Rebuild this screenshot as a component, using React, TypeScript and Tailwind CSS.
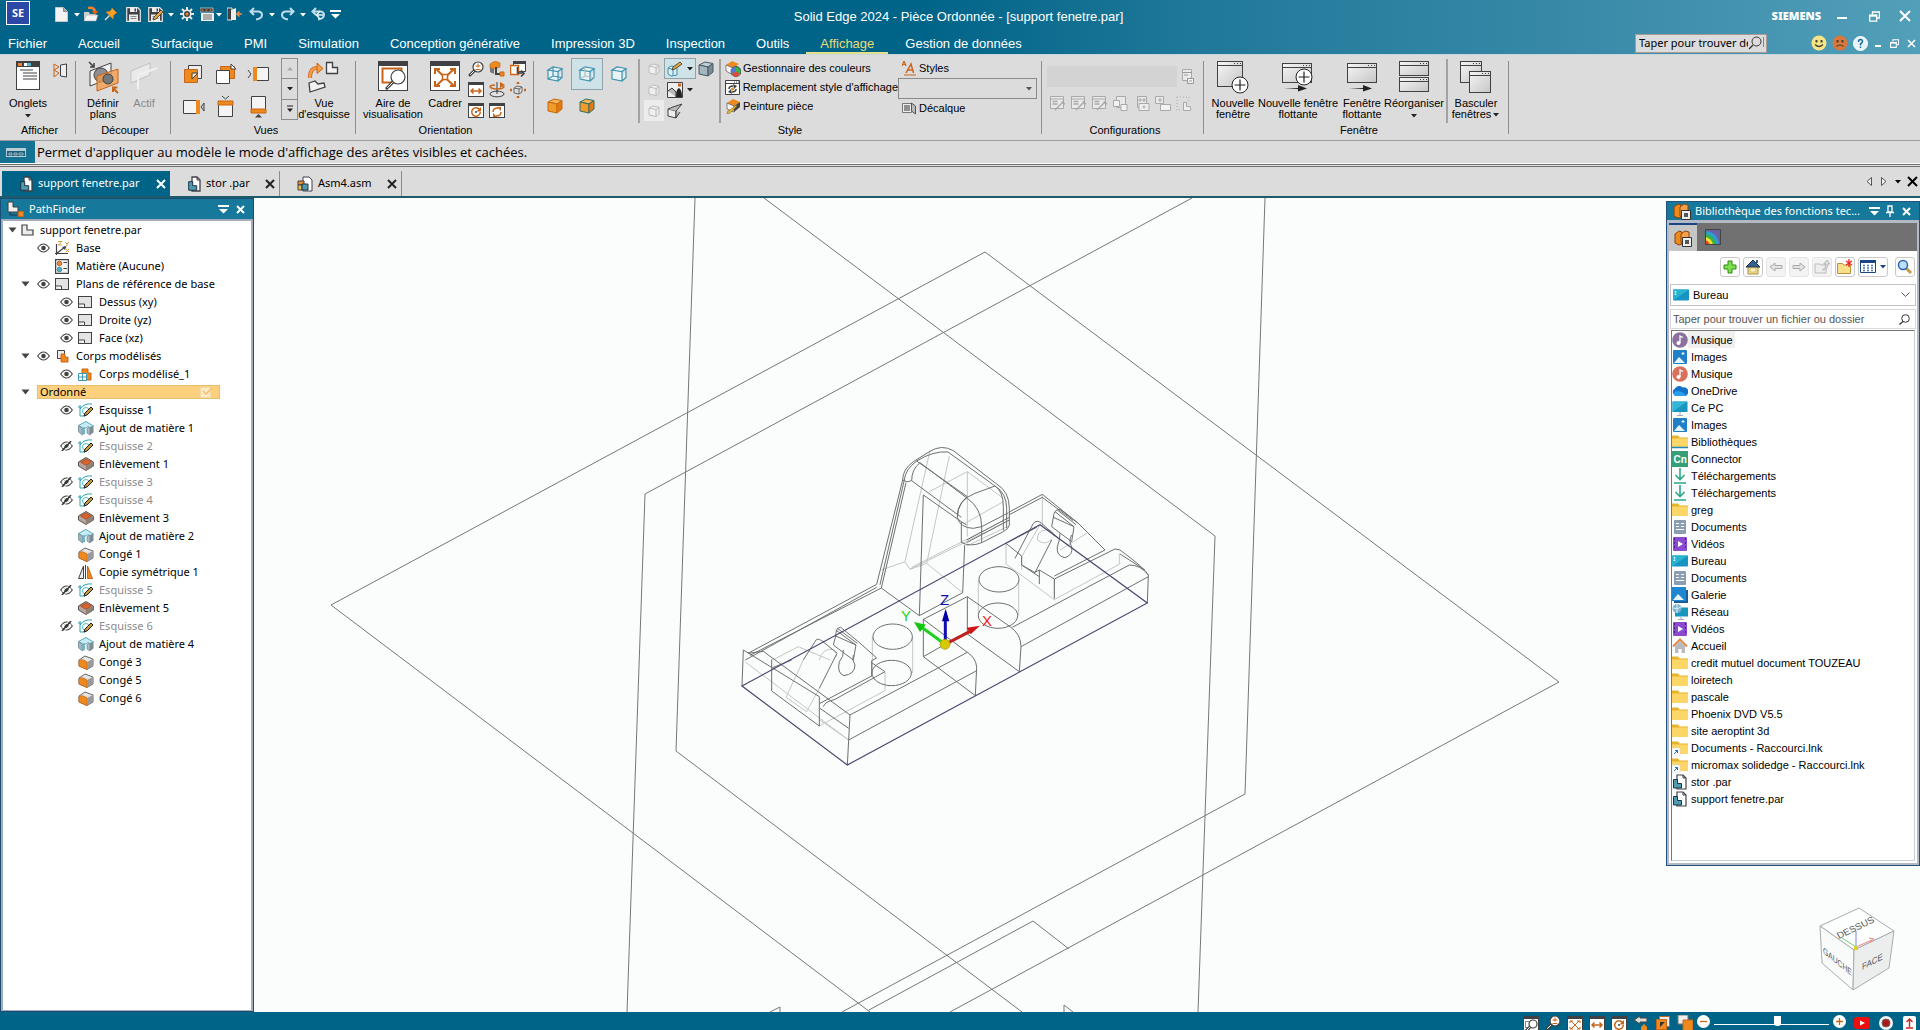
import React from "react";

type P = { children?: React.ReactNode };

const D = "#3f4145";
const O = "#ee8a1d";
const DO = "#c8651b";

function Ico({ w = 16, h = w, children }: P & { w?: number; h?: number }) {
  return (
    <svg width={w} height={h} viewBox={`0 0 ${w} ${h}`} fill="none" className="block shrink-0" aria-hidden="true">
      {children}
    </svg>
  );
}

/* ---------- shared glyphs ---------- */

const Caret = ({ c = "#222" }: { c?: string }) => (
  <Ico w={8} h={5}>
    <path d="M1 1h6l-3 3.5z" fill={c} />
  </Ico>
);

const Cross = ({ s = 11, c = "#fff", t = 2 }: { s?: number; c?: string; t?: number }) => (
  <Ico w={s}>
    <path d={`M1 1L${s - 1} ${s - 1}M${s - 1} 1L1 ${s - 1}`} stroke={c} strokeWidth={t} />
  </Ico>
);

const MenuMark = () => (
  <Ico w={11} h={10}>
    <path d="M0 1h11v2H0zM1 5h9L5.500 9.500z" fill="#fff" />
  </Ico>
);

function Cube({ s = 16, top = "#f9b45c", left = "#f39a2c", right = "#e27c12", line = "#c9690f" }: { s?: number; top?: string; left?: string; right?: string; line?: string }) {
  return (
    <svg width={s} height={s} viewBox="0 0 16 16" fill="none" className="block shrink-0" aria-hidden="true" strokeLinejoin="round">
      <path d="M1 4l6-3 8 1.500-5 3.500z" fill={top} stroke={line} />
      <path d="M1 4l9 2v9l-9-2z" fill={left} stroke={line} />
      <path d="M10 6l5-3.500V11l-5 4z" fill={right} stroke={line} />
    </svg>
  );
}

const WireCube = ({ hidden }: { hidden?: "full" | "dim" }) => (
  <Ico w={18}>
    <path d="M2 5l5-3 9 1.500-4 3zM2 5v9l10 2V6.500M12 16l4-3.500v-9" stroke="#3f93b0" strokeWidth="1.200" fill="#e9f3f6" />
    {hidden && <path d="M7 2v9l-5 3M7 11l9 1.500" stroke={hidden === "full" ? "#3f93b0" : "#b3bcc0"} strokeWidth="1.200" />}
  </Ico>
);

const GhostCube = () => (
  <Ico w={16}>
    <path d="M3 5l4-2 6 1.200-3 2.300zM3 5v7l7 1.500v-7M10 13.500l3-2.500V4.200" stroke="#bdbdbd" fill="#f0f0f0" />
  </Ico>
);

function Win({ w = 16, h = 15, children }: P & { w?: number; h?: number }) {
  return (
    <Ico w={w} h={h}>
      <rect x=".5" y=".5" width={w - 1} height={h - 1} fill="#fff" stroke={D} />
      <rect width={w} height={h > 20 ? 5 : 3} fill={D} />
      {children}
    </Ico>
  );
}

const Lens = ({ x, y, r, dark = D }: { x: number; y: number; r: number; dark?: string }) => (
  <g>
    <path d={`M${x - r * 0.7} ${y + r * 0.7}l${-r * 0.9} ${r * 0.9}`} stroke={dark} strokeWidth="3" strokeLinecap="round" />
    <path d={`M${x - r * 0.8} ${y + r * 0.8}l${-r * 0.7} ${r * 0.7}`} stroke="#fff" strokeWidth="1" strokeLinecap="round" />
    <circle cx={x} cy={y} r={r} fill="#fff" stroke={dark} strokeWidth="1.200" />
  </g>
);

/* ---------- quick access bar ---------- */

const NewDoc = () => (
  <Ico w={13} h={15}>
    <path d="M.5.5h8l4 4v10H.5z" fill="#f3f3f3" stroke="#c9c9c9" />
    <path d="M8.500.5v4h4" fill="#aaa" stroke="#8a8a8a" />
  </Ico>
);
const OpenDoc = () => (
  <Ico w={16}>
    <path d="M1 6h5l1 2h6v7H1z" fill="#cfcfcf" />
    <path d="M3 9h12l-2 6H1z" fill="#f4f4f4" stroke="#999" strokeWidth=".5" />
    <path d="M5 2c4-1 6 0 7 3" stroke="#f08030" strokeWidth="2.500" />
    <path d="M8.500 5h7L12 9z" fill="#e06010" />
  </Ico>
);
const Pin = () => (
  <Ico w={14}>
    <path d="M1 13l5-5" stroke="#ddd" strokeWidth="1.500" />
    <path d="M8 1l5 5-1.500.5-2 2L9 12 2 5l3.500-.5 2-2z" fill="#f6a02a" stroke="#d27a10" strokeWidth=".6" />
  </Ico>
);
const Floppy = ({ pen }: { pen?: boolean }) => (
  <Ico w={15}>
    <path d="M.7.7h11l2.600 2.600v11H.7z" fill={D} stroke="#e8e8e8" strokeWidth="1.200" />
    <path d="M4 1h7v4H4z" fill="#eee" />
    <path d="M8.500 1.500h1.500v3H8.500z" fill={D} />
    <path d="M3 7.500h9V14H3z" fill="#eee" />
    <path d="M4.500 9.500h6M4.500 11.500h6" stroke="#888" />
    {pen && <path d="M5 13l1-3 7-7 2 2-7 7z" fill="#e9a33c" stroke="#333" strokeWidth=".8" />}
  </Ico>
);
const Gear = () => (
  <Ico w={14}>
    <path d="M7 0v14M0 7h14M2 2l10 10M12 2L2 12" stroke="#e8e8e8" strokeWidth="2" />
    <circle cx="7" cy="7" r="4.500" fill="#e8e8e8" />
    <circle cx="7" cy="7" r="3" fill={D} />
    <circle cx="7" cy="7" r="1.500" fill="#f08a3c" />
  </Ico>
);
const ListWin = () => (
  <Ico w={15} h={15}>
    <path d="M0 1h13v4H0z" fill="#333" stroke="#ddd" strokeWidth=".7" />
    <path d="M1.500 3h2M5.500 3h2M9.500 3h2" stroke="#f6a66a" strokeWidth="1.200" />
    <path d="M1 6h13v8H1z" fill="#f2f2f2" />
    <path d="M3 8h9M3 10h9M3 12h9" stroke="#666" />
  </Ico>
);
const Exit = () => (
  <Ico w={16} h={14}>
    <path d="M0 1h5v12H0z" fill={D} stroke="#ddd" />
    <path d="M4 3l5-2v12H4z" fill="#eee" />
    <path d="M15 7H10M12.500 4.500L10 7l2.500 2.500" stroke="#f08a3c" strokeWidth="1.700" />
  </Ico>
);
const Undo = ({ flip, double }: { flip?: boolean; double?: boolean }) => (
  <Ico w={15} h={14}>
    <g transform={flip ? "matrix(-1 0 0 1 15 0)" : undefined}>
      <path d="M5 1L1.500 4.500 5 8M2 4.500h7q4 0 4 3.500t-6 4.500" stroke="#bcdde9" strokeWidth="2" />
      {double && <path d="M9 4L5.500 8 9 12M6 8h6" stroke="#e4f2f7" strokeWidth="1.600" />}
    </g>
  </Ico>
);

const Restore = ({ s = 11 }: { s?: number }) => (
  <svg width={s} height={s} viewBox="0 0 11 11" fill="none" className="block" aria-hidden="true">
    <path d="M3.500 3.500V1h7v6H8" stroke="#fff" strokeWidth="1.300" />
    <path d="M.7 4.200h7v6h-7z" stroke="#fff" strokeWidth="1.300" />
    <path d="M.7 4.700h7" stroke="#fff" strokeWidth="2" />
  </svg>
);

const Face = ({ c, sad }: { c: string; sad?: boolean }) => (
  <Ico w={16}>
    <circle cx="8" cy="8" r="7.500" fill={c} />
    <rect x="4.500" y="5" width="2" height="2.500" fill="#443" />
    <rect x="9.500" y="5" width="2" height="2.500" fill="#443" />
    <path d={sad ? "M4.500 11.500q3.500-3 7 0" : "M4 9.500q4 4 8 0"} stroke="#443" strokeWidth="1.200" />
  </Ico>
);

function HeadBtn({ label, children, cls = "" }: P & { label: string; cls?: string }) {
  return (
    <button type="button" aria-label={label} className={`flex items-center justify-center ${cls}`}>
      {children}
    </button>
  );
}

const MENU = ["Fichier", "Accueil", "Surfacique", "PMI", "Simulation", "Conception générative", "Impression 3D", "Inspection", "Outils", "Affichage", "Gestion de données"];

function Header() {
  return (
    <header className="flex h-[54px] shrink-0 flex-col bg-[linear-gradient(90deg,#006488_0%,#006488_48%,#1f7899_62%,#3a8aa9_83%,#529fb9_100%)] text-white">
      <div className="flex h-[32px] items-start">
        <div className="flex flex-1 items-start pl-[6px]">
          <div className="mt-px flex h-6 w-6 items-center justify-center border border-white bg-[#2b48a6] font-['Noto_Sans',sans-serif] text-[11px] font-bold">SE</div>
          <div className="mt-[6px] ml-[25px] flex h-4 items-center">
            <HeadBtn label="Nouveau"><NewDoc /></HeadBtn>
            <HeadBtn label="Options nouveau" cls="ml-[3px] w-3"><Caret c="#fff" /></HeadBtn>
            <HeadBtn label="Ouvrir"><OpenDoc /></HeadBtn>
            <HeadBtn label="Épingler" cls="ml-[5px]"><Pin /></HeadBtn>
            <HeadBtn label="Enregistrer" cls="ml-2"><Floppy /></HeadBtn>
            <HeadBtn label="Enregistrer sous" cls="ml-[7px]"><Floppy pen /></HeadBtn>
            <HeadBtn label="Options enregistrer" cls="ml-1 w-2"><Caret c="#fff" /></HeadBtn>
            <HeadBtn label="Options" cls="ml-[5px]"><Gear /></HeadBtn>
            <HeadBtn label="Fenêtres" cls="ml-[6px]"><ListWin /></HeadBtn>
            <HeadBtn label="Options fenêtres" cls="w-2"><Caret c="#fff" /></HeadBtn>
            <HeadBtn label="Fermer le fichier" cls="ml-1"><Exit /></HeadBtn>
            <HeadBtn label="Annuler" cls="ml-[6px]"><Undo /></HeadBtn>
            <HeadBtn label="Liste annuler" cls="ml-1 w-2"><Caret c="#fff" /></HeadBtn>
            <HeadBtn label="Rétablir" cls="ml-1"><Undo flip /></HeadBtn>
            <HeadBtn label="Liste rétablir" cls="ml-1 w-2"><Caret c="#fff" /></HeadBtn>
            <HeadBtn label="Annuler tout" cls="ml-1"><Undo double /></HeadBtn>
            <HeadBtn label="Personnaliser" cls="ml-1"><MenuMark /></HeadBtn>
          </div>
        </div>
        <h1 className="pt-[7px] font-['Liberation_Sans',Arial,sans-serif] text-[13px] leading-[19px]">Solid Edge 2024 - Pièce Ordonnée - [support fenetre.par]</h1>
        <div className="flex flex-1 items-start justify-end pt-[7px] pr-[9px]">
          <span className="font-['Noto_Sans',sans-serif] text-[11px] leading-[18px] font-black">SIEMENS</span>
          <div className="ml-4 flex h-[18px] items-center">
            <HeadBtn label="Réduire" cls="mt-1"><Ico w={10} h={2}><path d="M0 1h10" stroke="#fff" strokeWidth="2" /></Ico></HeadBtn>
            <HeadBtn label="Restaurer" cls="ml-[22px]"><Restore /></HeadBtn>
            <HeadBtn label="Fermer" cls="ml-[19px]"><Cross s={12} /></HeadBtn>
          </div>
        </div>
      </div>
      <div className="flex h-[22px] items-center justify-between">
        <nav className="flex h-full gap-[3px] font-['Liberation_Sans',Arial,sans-serif] text-[13px]">
          {MENU.map((m, i) => (
            <button
              key={m}
              type="button"
              className={`h-full pt-[3px] leading-[17px] ${i === 0 ? "pr-[14px] pl-2" : "px-[14px]"} ${m === "Affichage" ? "border-b-2 border-[#e3e08a] text-[#e6dc78]" : "border-b-2 border-transparent"}`}
            >
              {m}
            </button>
          ))}
        </nav>
        <div className="flex items-center pr-1">
          <label className="flex h-[19px] w-[132px] items-center border border-[#a89a94] bg-[#dcdcdc] pl-[3px]">
            <input aria-label="Rechercher une commande" placeholder="Taper pour trouver des commandes" className="w-[109px] bg-transparent font-['Noto_Sans',sans-serif] text-[11px] text-black outline-none placeholder:text-black" />
            <Ico w={16} h={14}>
              <circle cx="8.500" cy="5.500" r="4.500" stroke="#333" />
              <path d="M5 9l-4 4" stroke="#333" strokeWidth="1.300" />
              <path d="M15.500 1v10" stroke="#888" />
            </Ico>
          </label>
          <div className="ml-[44px] flex items-center">
            <HeadBtn label="Satisfait"><Face c="#f6e486" /></HeadBtn>
            <HeadBtn label="Mécontent" cls="ml-[5px]"><Face c="#d9773f" sad /></HeadBtn>
            <HeadBtn label="Aide" cls="ml-[5px] h-[15px] w-[15px] rounded-full border border-white bg-[#e9f4fa]">
              <Ico w={13}>
                <path d="M4.500 5q0-2.500 2-2.500t2 2q0 1.200-2 2.500v1.500M6.500 9.500V11" stroke="#1d6f9d" strokeWidth="1.500" />
              </Ico>
            </HeadBtn>
            <HeadBtn label="Réduire le document" cls="mt-[6px] ml-[7px]"><Ico w={6} h={2}><path d="M0 1h6" stroke="#fff" strokeWidth="2" /></Ico></HeadBtn>
            <HeadBtn label="Restaurer le document" cls="ml-[9px]"><Restore s={9} /></HeadBtn>
            <HeadBtn label="Fermer le document" cls="ml-2"><Cross s={9} t={1.5} /></HeadBtn>
          </div>
        </div>
      </div>
    </header>
  );
}

/* ---------- ribbon icons ---------- */

const Onglets = () => (
  <Ico w={24} h={29}>
    <rect x=".5" y=".5" width="23" height="28" fill="#fff" stroke={D} />
    <rect width="24" height="6" fill={D} />
    <path d="M2 2h4v3H2z" fill="#e8803a" />
    <path d="M8 2h4v3H8z" fill="#fff" />
    <path d="M11 2h4v3h-4z" fill="#5bb0cf" />
    <path d="M4 9h13M7 12h14M7 15h14M7 18h14" stroke={D} />
  </Ico>
);
const SidePane = () => (
  <Ico w={15}>
    <path d="M1 1v13M1 1l5 3-5 3 5 3-5 4" stroke={DO} />
    <path d="M7.500 2l6-1v13l-6-1z" fill="#eee" stroke={D} />
  </Ico>
);
const DefinePlanes = () => (
  <Ico w={32} h={33}>
    <path d="M2 1l5 5M7 2v4H3" stroke={D} strokeWidth="1.500" />
    <path d="M3 10L24 2v15L3 25z" fill="#f2f2f2" stroke={D} />
    <circle cx="14" cy="14" r="7" fill="#8d8f92" stroke={D} />
    <path d="M10 15l21-7v14l-21 8z" fill="#f39a45" fillOpacity=".75" stroke={DO} />
    <circle cx="21" cy="18" r="5" fill="#777" stroke={D} />
    <path d="M31 32l-5-5M26 31v-4.500h4.500" stroke={DO} strokeWidth="2" />
  </Ico>
);
const Actif = () => (
  <Ico w={28} h={30}>
    <path d="M1 10L20 2v12L1 22z" fill="#eaeaea" stroke="#c2c2c2" />
    <path d="M8 28V14L27 7" stroke="#f0f0f0" strokeWidth="2" />
  </Ico>
);
const V1 = () => (
  <Ico w={20}>
    <path d="M5.500 1.500h13v13h-13z" fill="#eee" stroke={D} />
    <path d="M1.500 5.500h13v13h-13z" fill={O} stroke={DO} />
    <path d="M9 15v-6h6z" fill="#fbe0b8" stroke={D} />
  </Ico>
);
const V2 = () => (
  <Ico w={22}>
    <path d="M5.500 3.500h14v12h-14z" fill={O} stroke={DO} />
    <path d="M1.500 7.500h13v13h-13z" fill="#fff" stroke={D} />
    <path d="M16 1v5h5z" fill="#fff" stroke={D} />
  </Ico>
);
const V3 = () => (
  <Ico w={23} h={16}>
    <path d="M6.500 1.500h15v13h-15z" fill="#f4f4f4" stroke={D} />
    <path d="M6 1h4v14H6z" fill={O} />
    <path d="M1 4l3 4-3 4" stroke={D} />
  </Ico>
);
const V4 = () => (
  <Ico w={23} h={16}>
    <path d="M1.500 1.500h16v13h-16z" fill="#f4f4f4" stroke={D} />
    <path d="M14 1h4v14h-4z" fill={O} />
    <path d="M22 4v8l-3-4z" fill="#ccc" stroke={D} />
  </Ico>
);
const V5 = () => (
  <Ico w={17} h={22}>
    <path d="M1.500 7.500h14v13h-14z" fill="#f4f4f4" stroke={D} />
    <path d="M1 5h15v4H1z" fill={O} stroke={DO} />
    <path d="M5 0l3.500 3L12 0" stroke={D} />
  </Ico>
);
const V6 = () => (
  <Ico w={17} h={23}>
    <path d="M1.500 1.500h14v16h-14z" fill="#f4f4f4" stroke={D} />
    <path d="M1 14h15v4H1z" fill={O} stroke={DO} />
    <path d="M5 22.500h7L8.500 19z" fill={D} />
  </Ico>
);
const SketchView = () => (
  <Ico w={32} h={32}>
    <path d="M2 17Q2 6 10 7" stroke={DO} strokeWidth="4" />
    <path d="M2 17Q2 6 10 7" stroke="#f6a04a" strokeWidth="2.500" />
    <path d="M9 2l6 5.500-6 5z" fill="#f6a04a" stroke={DO} />
    <path d="M18.500 1.500h6v5h5v6h-11z" fill="#f2f2f2" stroke={D} strokeWidth="1.300" />
    <path d="M1 22l6-2 3 3 6-1 1 4-15 5z" fill="#f2f2f2" stroke={D} strokeWidth="1.300" />
  </Ico>
);
const ViewArea = () => (
  <Win w={30} h={30}>
    <rect x="4.500" y="7.500" width="19" height="14" stroke={DO} strokeWidth="2" />
    <Lens x={20} y={16} r={7} />
  </Win>
);
const FitBig = () => (
  <Win w={30} h={30}>
    <path d="M6 8l18 17M24 8L6 25" stroke={DO} strokeWidth="2" />
    <path d="M5 13V8h5M20 8h5v5M25 20v5h-5M10 25H5v-5" stroke={DO} strokeWidth="2" />
    <rect x="12.500" y="13.500" width="5" height="5" fill="#fff" stroke={DO} strokeWidth="1.500" />
  </Win>
);
const ZoomPM = () => (
  <Ico w={16}>
    <Lens x={10} y={6} r={5} />
    <path d="M7.500 5h5M10 2.500v4M7.500 8.500h5" stroke={DO} />
  </Ico>
);
const CubeMove = () => (
  <Ico w={16}>
    <path d="M1 3l5-3 5 2v4L6 8 1 7z" fill={O} stroke={DO} strokeWidth=".7" />
    <path d="M1 6v5l4 2V8z" fill="#777" />
    <path d="M7 6v7h4" stroke={D} strokeWidth="2" />
    <path d="M11 11h4v4h-4z" fill={O} stroke={DO} />
  </Ico>
);
const WinMove = () => (
  <Ico w={16}>
    <path d="M3.500 1.500h12v9h-12z" fill="#fff" stroke={D} />
    <path d="M3 0h13v3H3z" fill={D} />
    <path d="M.5 4.500h8v9h-8z" fill="#fff" stroke={DO} strokeWidth="1.500" />
    <path d="M7.500 6v6h5M11 9.500l3 3-3 3" stroke={D} strokeWidth="1.600" />
  </Ico>
);
const PanWin = () => (
  <Win>
    <path d="M3 9h10M5.500 6.500L3 9l2.500 2.500M10.500 6.500L13 9l-2.500 2.500" stroke={DO} strokeWidth="1.500" />
  </Win>
);
const Spin = () => (
  <Ico w={16}>
    <path d="M8 0v12" stroke={D} />
    <path d="M1 5q0-2 5-2M15 4q0 3-7 3-5 0-7-2" stroke={DO} strokeWidth="1.600" />
    <path d="M11 0l5 3-5 3z" fill={DO} />
    <ellipse cx="8" cy="12" rx="7" ry="2.800" fill="#e4e4e4" stroke={D} />
    <path d="M8 8v4" stroke={D} />
  </Ico>
);
const CubeTargets = () => (
  <Ico w={16}>
    <path d="M4 6l3-2 5 1v5l-3 2-5-1z" fill="#ddd" stroke="#666" />
    <path d="M4 6l5 1 3-2M9 7v5" stroke="#666" />
    <path d="M8 0v2M8 14v2M0 8h2M14 8h2" stroke={DO} strokeWidth="2.500" />
  </Ico>
);
const RotWin = () => (
  <Win>
    <path d="M11.500 6.500A4.300 4.300 0 1 0 12.300 9" stroke={DO} strokeWidth="1.500" />
    <path d="M8.500 8.500L13 4v4.500z" fill={DO} />
    <circle cx="8" cy="9" r="1" fill={D} />
  </Win>
);
const RefreshWin = () => (
  <Win>
    <path d="M4 9q0-4 5-4M12 9q0 4-5 4" stroke={DO} strokeWidth="1.500" />
    <path d="M8 4h4v4zM8 14H4v-4z" fill={DO} />
  </Win>
);
const PencilCube = () => (
  <Ico w={16}>
    <path d="M1 7l3-2 6 1v8l-6 1-3-2z" stroke="#3f93b0" fill="#dcecf1" />
    <path d="M1 7l5 1.500V15" stroke="#3f93b0" />
    <path d="M5 9l1-3 7-5 2 2-7 5z" fill="#e9a33c" stroke="#333" strokeWidth=".8" />
  </Ico>
);
const Backdrop = () => (
  <Ico w={16}>
    <path d="M.5.500h15v15H.5z" fill="#eee" stroke={D} />
    <path d="M9 15q0-8 3-9 3 2 3 9z" fill="#222" />
    <path d="M1 9l4-3 4 4v5" fill="#bbb" stroke="#333" />
    <path d="M11 3h3" stroke={DO} strokeWidth="3" />
  </Ico>
);
const SharpCube = () => (
  <Ico w={16}>
    <path d="M1 6l8 2v7l-8-2z" fill="#eee" stroke={D} />
    <path d="M1 6l5-2 9-3-6 7v7l4-6" fill="#bbb" stroke={D} />
  </Ico>
);
const ColorMgr = () => (
  <Ico w={16}>
    <path d="M1 4l6-4 7 3-6 4z" fill={O} />
    <path d="M1 4l7 3v7l-7-4z" fill="#fafafa" stroke="#555" strokeWidth=".7" />
    <circle cx="11" cy="10.500" r="5" fill="#36b24a" stroke="#333" strokeWidth=".8" />
    <path d="M11 10.500V5.500a5 5 0 0 0-4.300 7.500z" fill="#5a76d8" />
    <path d="M11 10.500l-4.300 2.500a5 5 0 0 0 8.600 0z" fill="#e04a3a" />
  </Ico>
);
const Replace = () => (
  <Ico w={15}>
    <path d="M.5.500h14v14H.5z" fill="#fff" stroke={D} />
    <path d="M0 3.500h15M9 2h1M11 2h1M13 2h1" stroke={D} />
    <path d="M4 9q0-3 4-3M11 9q0 3-4 3" stroke={D} strokeWidth="1.500" />
    <path d="M8 4l4 2-3 3zM7 14l-4-2 3-3z" fill={D} />
    <circle cx="7.500" cy="9" r="1.500" fill={O} />
  </Ico>
);
const Paint = () => (
  <Ico w={15}>
    <path d="M1 4l6-4 7 3-6 4z" fill={O} />
    <path d="M1 4l7 3v6l-7-3z" fill="#f4f4f4" stroke="#555" strokeWidth=".7" />
    <path d="M8 7l6-4v5l-6 5z" fill="#444" />
    <path d="M1 15q0-4 3-4l6-5 1 1-6 6q-1 2-4 2z" fill="#e8b432" stroke="#7a5a10" strokeWidth=".5" />
  </Ico>
);
const StyleAA = () => (
  <Ico w={14} h={15}>
    <path d="M0 5l2-5 2 5M.8 3.500h2.400" stroke={DO} strokeWidth="1.200" />
    <path d="M4 12l5-9 2.500 9M6 9h5" stroke={DO} strokeWidth="1.500" />
    <path d="M2 14h12" stroke={DO} />
  </Ico>
);
const Decal = () => (
  <Ico w={14} h={13}>
    <path d="M.5 1.500h9v9h-9z" fill="#eee" stroke="#777" />
    <path d="M3 3v6M5 3v6M7 3v6" stroke="#333" />
    <path d="M9.500 1l4 3v8l-4-3z" fill="#bbb" stroke="#555" />
  </Ico>
);
const CfgIcon = ({ k }: { k: number }) => (
  <Ico w={16}>
    {k === 6 ? (
      <path d="M1 1h12v4M1 1v13h4" stroke="#a9a9a9" strokeDasharray="1 2" />
    ) : (
      <path d={k < 3 ? "M.5.500h13v12H.5zM.5 3h13" : k === 5 ? "M.5.500h8v7h-8z" : "M3.500.500h9v11h-9z"} stroke="#a9a9a9" fill="#e9e9e9" />
    )}
    {k < 3 && <path d="M2.500 5.500h5M2.500 8h5M5 14l8-8M12 5l1 2 2 1" stroke="#a9a9a9" strokeWidth="1.400" />}
    {k === 3 && <path d="M.5 4.500h6v6h-6zM8 8.500h6v6H8z" stroke="#a9a9a9" fill="#f2f2f2" />}
    {k === 4 && <path d="M5 3h2v2H5zM9 3h2v2H9zM5 7.500h10v7H5zM10 9.500v3M8.500 11h3" stroke="#a9a9a9" fill="#eee" />}
    {k === 5 && <path d="M3 4h4M5 2v4M5.500 8.500h10v6h-10z" stroke="#a9a9a9" fill="#f2f2f2" />}
    {k === 6 && <path d="M7.500 6.500h3v4h4v4h-7z" fill="#eee" stroke="#a9a9a9" />}
    {k === 7 && <path d="M3.500 3.500h9M5 6h4M8.500 9.500h6v5h-6zM10 12h3" stroke="#999" fill="#f2f2f2" />}
  </Ico>
);

const Pane = ({ x, y, w, h }: { x: number; y: number; w: number; h: number }) => (
  <g>
    <rect x={x + 0.5} y={y + 0.5} width={w} height={h} fill="url(#paneFill)" stroke={D} />
    <path d={`M${x} ${y + 4.5}h${w + 1}`} stroke={D} />
    <path d={`M${x + w - 8} ${y + 2.5}h7`} stroke={D} strokeDasharray="1 2" />
  </g>
);
const PaneDefs = () => (
  <defs>
    <linearGradient id="paneFill" x1="0" y1="0" x2="1" y2="1">
      <stop offset="0" stopColor="#f6f6f6" />
      <stop offset="1" stopColor="#c6c6c6" />
    </linearGradient>
  </defs>
);
const Plus = ({ x, y }: { x: number; y: number }) => (
  <g>
    <circle cx={x} cy={y} r="8" fill="#fff" stroke="#222" />
    <path d={`M${x - 5.5} ${y}h11M${x} ${y - 5.5}v11`} stroke="#222" strokeWidth="1.200" />
  </g>
);
const Arrow = ({ x, y }: { x: number; y: number }) => <path d={`M${x} ${y}h14v-3l9 3.500-9 3v-2.500z`} fill="#222" />;

/* ---------- ribbon ---------- */

const Sep = () => <div className="my-[6px] w-px shrink-0 bg-[#8e8e8e]" />;

function Group({ label, cls = "", labelCls = "", children }: P & { label: string; cls?: string; labelCls?: string }) {
  return (
    <section aria-label={label} className={`flex shrink-0 flex-col pt-[2px] ${cls}`}>
      <div className="flex h-[66px]">{children}</div>
      <div className={`text-center leading-[14px] ${labelCls}`}>{label}</div>
    </section>
  );
}

function Big({ icon, lines, cls, caret, tailCaret, dim }: { icon: React.ReactNode; lines: string[]; cls: string; caret?: boolean; tailCaret?: boolean; dim?: boolean }) {
  return (
    <button type="button" className={`flex shrink-0 flex-col items-center pt-1 leading-[11px] whitespace-nowrap ${dim ? "text-[#8a8a8a]" : ""} ${cls}`}>
      <span className="flex h-[37px] items-start">{icon}</span>
      {lines.map((l, i) => (
        <span key={l} className="flex items-center gap-px">
          {l}
          {tailCaret && i === lines.length - 1 && <Caret />}
        </span>
      ))}
      {caret && <span className="mt-1"><Caret /></span>}
    </button>
  );
}

function Cell({ label, cls = "", children }: P & { label: string; cls?: string }) {
  return (
    <button type="button" aria-label={label} className={`flex items-center justify-center ${cls}`}>
      {children}
    </button>
  );
}

function Row({ icon, text }: { icon: React.ReactNode; text: string }) {
  return (
    <button type="button" className="flex h-[19px] items-center gap-[2px] whitespace-nowrap">
      <span className="flex w-4 justify-center">{icon}</span>
      {text}
    </button>
  );
}

function Ribbon() {
  return (
    <div className="flex h-[87px] shrink-0 border-t border-b border-t-[#c8d6dc] border-b-[#9c9c9c] bg-[#dcdcdc] font-['Liberation_Sans',Arial,sans-serif] text-[11px] text-black">
      <Group label="Afficher" cls="w-[75px]" labelCls="pl-1">
        <Big icon={<Onglets />} lines={["Onglets"]} caret cls="w-[56px]" />
        <Cell label="Volets" cls="h-[26px] w-2"><SidePane /></Cell>
      </Group>
      <Sep />
      <Group label="Découper" cls="w-[94px]" labelCls="pl-1">
        <Big icon={<DefinePlanes />} lines={["Définir", "plans"]} cls="w-[54px]" />
        <Big icon={<Actif />} lines={["Actif"]} dim cls="w-[28px]" />
      </Group>
      <Sep />
      <Group label="Vues" cls="w-[184px] pl-[6px]">
        <div className="grid w-[98px] grid-cols-3 grid-rows-2">
          <Cell label="Vue de dessus"><V1 /></Cell>
          <Cell label="Vue de face"><V2 /></Cell>
          <Cell label="Vue de gauche"><V3 /></Cell>
          <Cell label="Vue de droite"><V4 /></Cell>
          <Cell label="Vue arrière"><V5 /></Cell>
          <Cell label="Vue de dessous"><V6 /></Cell>
        </div>
        <div className="mt-px ml-[6px] flex h-[62px] w-[17px] flex-col border border-[#8e8e8e]">
          <Cell label="Monter" cls="flex-1 border-b border-[#8e8e8e]"><Ico w={8} h={5}><path d="M1 4.500h6L4 1z" fill="#aaa" /></Ico></Cell>
          <Cell label="Descendre" cls="flex-1 border-b border-[#8e8e8e]"><Caret /></Cell>
          <Cell label="Toutes les vues" cls="flex-1"><Ico w={8} h={8}><path d="M1 1h6" stroke="#222" /><path d="M1 3.500h6L4 7z" fill="#222" /></Ico></Cell>
        </div>
        <Big icon={<SketchView />} lines={["Vue", "d'esquisse"]} cls="w-[52px]" />
      </Group>
      <Sep />
      <Group label="Orientation" cls="w-[177px] pl-[2px]">
        <Big icon={<ViewArea />} lines={["Aire de", "visualisation"]} cls="w-[70px]" />
        <Big icon={<FitBig />} lines={["Cadrer"]} cls="w-[34px]" />
        <div className="mt-px ml-[3px] grid h-[63px] w-[63px] grid-cols-3 grid-rows-3">
          <Cell label="Zoom"><ZoomPM /></Cell>
          <Cell label="Faire glisser"><CubeMove /></Cell>
          <Cell label="Déplacer"><WinMove /></Cell>
          <Cell label="Panoramique"><PanWin /></Cell>
          <Cell label="Tourner"><Spin /></Cell>
          <Cell label="Regarder une face"><CubeTargets /></Cell>
          <Cell label="Rotation"><RotWin /></Cell>
          <Cell label="Actualiser"><RefreshWin /></Cell>
        </div>
      </Group>
      <Sep />
      <Group label="Style" cls="w-[507px] pl-[5px]">
        <div className="mt-px grid h-16 w-24 grid-cols-3 grid-rows-2">
          <Cell label="Filaire"><WireCube hidden="full" /></Cell>
          <Cell label="Arêtes visibles et cachées" cls="border border-[#8ea4ad] bg-[#cfe2e8]"><WireCube hidden="dim" /></Cell>
          <Cell label="Arêtes visibles"><WireCube /></Cell>
          <Cell label="Ombré"><Cube /></Cell>
          <Cell label="Ombré avec arêtes"><Cube line="#2f6f62" /></Cell>
        </div>
        <div className="mt-[2px] ml-[3px] h-16 w-[2px] bg-[#a2a2a2]" />
        <div className="mt-px ml-1 grid h-[63px] grid-cols-[20px_32px_20px] grid-rows-3">
          <Cell label="Ombre portée"><GhostCube /></Cell>
          <Cell label="Arêtes vives" cls="gap-[3px] border border-[#8ea4ad] bg-[#cfe2e8]"><PencilCube /><Caret /></Cell>
          <Cell label="Perspective"><Cube top="#c3ced4" left="#a3b7c0" right="#7c8a92" line="#4a5a62" /></Cell>
          <Cell label="Réflexion"><GhostCube /></Cell>
          <Cell label="Arrière-plan" cls="gap-[3px]"><Backdrop /><Caret /></Cell>
          <span />
          <Cell label="Occlusion" cls="bg-[#ececec]"><GhostCube /></Cell>
          <Cell label="Netteté" cls="justify-start pl-[3px]"><SharpCube /></Cell>
        </div>
        <div className="mt-[2px] ml-[3px] h-16 w-[2px] bg-[#a2a2a2]" />
        <div className="mt-[2px] ml-1 flex w-[173px] flex-col">
          <Row icon={<ColorMgr />} text="Gestionnaire des couleurs" />
          <Row icon={<Replace />} text="Remplacement style d'affichage" />
          <Row icon={<Paint />} text="Peinture pièce" />
        </div>
        <div className="mt-[2px] w-[139px]">
          <div className="pl-[3px]"><Row icon={<StyleAA />} text="Styles" /></div>
          <div className="relative h-[21px]">
            <select aria-label="Style" className="h-full w-full appearance-none border border-[#8a8a8a] bg-[#dcdcdc]" />
            <span className="pointer-events-none absolute top-[8px] right-[4px]"><Caret c="#555" /></span>
          </div>
          <div className="pl-[3px]"><Row icon={<Decal />} text="Décalque" /></div>
        </div>
      </Group>
      <Sep />
      <Group label="Configurations" cls="w-[161px] pl-[5px]">
        <div>
          <div className="mt-[9px] flex items-center gap-[2px]">
            <select aria-label="Configuration" disabled className="h-[21px] w-[130px] appearance-none bg-[#d3d3d3]" />
            <Cell label="Enregistrer la configuration"><CfgIcon k={7} /></Cell>
          </div>
          <div className="mt-[9px] flex gap-[5px] pl-[3px]">
            {[0, 1, 2, 3, 4, 5, 6].map((k) => (
              <Cell key={k} label={`Configuration ${k + 1}`}><CfgIcon k={k} /></Cell>
            ))}
          </div>
        </div>
      </Group>
      <Sep />
      <Group label="Fenêtre" cls="w-[304px] pl-[6px]">
        <Big cls="w-[46px]" lines={["Nouvelle", "fenêtre"]} icon={<Ico w={32} h={33}><PaneDefs /><Pane x={0} y={0} w={25} h={25} /><Plus x={23} y={24} /></Ico>} />
        <Big cls="w-[84px]" lines={["Nouvelle fenêtre", "flottante"]} icon={<Ico w={32} h={33}><Pane x={0} y={2} w={29} h={19} /><Plus x={22} y={16} /><Arrow x={2} y={27} /></Ico>} />
        <Big cls="w-[44px]" lines={["Fenêtre", "flottante"]} icon={<Ico w={31} h={33}><Pane x={0} y={2} w={29} h={19} /><Arrow x={2} y={27} /></Ico>} />
        <Big cls="w-[60px]" caret lines={["Réorganiser"]} icon={<Ico w={31} h={33}><Pane x={0} y={0} w={29} h={14} /><Pane x={0} y={16} w={29} h={14} /></Ico>} />
        <div className="mt-[2px] ml-[2px] h-16 w-[2px] bg-[#a2a2a2]" />
        <Big cls="w-[56px]" tailCaret lines={["Basculer", "fenêtres"]} icon={<Ico w={32} h={33}><Pane x={0} y={0} w={21} h={21} /><Pane x={9} y={10} w={21} h={21} /></Ico>} />
      </Group>
      <Sep />
    </div>
  );
}

/* ---------- prompt bar and document tabs ---------- */

const PartDoc = () => (
  <Ico w={13} h={16}>
    <path d="M4 1h5l3 3v11H4z" fill="#fff" stroke={D} strokeWidth="1.300" />
    <path d="M9 1v3h3" stroke={D} />
    <path d="M.7 5.700h4v4h4v4.500h-8z" fill="#4f9bb0" stroke="#234" />
  </Ico>
);
const AsmDoc = () => (
  <Ico w={16}>
    <path d="M6 1h6l3 3v11H6z" fill="#fff" stroke={D} />
    <path d="M1 5h6v4H1z" fill={O} stroke={D} />
    <path d="M1 9h4v5H1z" fill="#f0c040" stroke={D} />
    <path d="M5 8h6v6H5z" fill="#4f9bb0" stroke="#234" />
  </Ico>
);

function DocTab({ name, active, icon, cls }: { name: string; active?: boolean; icon: React.ReactNode; cls: string }) {
  return (
    <div className={`flex h-full items-center ${active ? "bg-[#006488] text-white" : "border-r border-[#8c8c8c]"} ${cls}`}>
      <button type="button" className="flex items-center gap-[5px] whitespace-nowrap">
        {icon}
        {name}
      </button>
      <button type="button" aria-label={`Fermer ${name}`} className="ml-auto pr-[4px]">
        <Cross s={10} c={active ? "#fff" : "#222"} />
      </button>
    </div>
  );
}

function Bars() {
  return (
    <>
      <div className="flex h-[23px] shrink-0 items-center border-b border-b-white bg-[#dcdcdc] font-['Open_Sans',sans-serif] text-[13px] text-black">
        <div className="flex h-full w-[35px] items-center justify-center bg-[#157293] pr-1">
          <Ico w={20} h={9}>
            <rect x=".5" y=".5" width="19" height="8" fill="#1c5d78" stroke="#b9cdd6" />
            <path d="M1 2h18" stroke="#b9cdd6" strokeWidth="2" />
            <path d="M3 5h3v2H3zM8 5h3v2H8zM13 5h4v2h-4z" stroke="#b9cdd6" strokeWidth=".8" />
          </Ico>
        </div>
        <p className="pl-[2px] leading-[21px]">Permet d'appliquer au modèle le mode d'affichage des arêtes visibles et cachées.</p>
      </div>
      <div className="h-[3px] shrink-0 border-y border-[#6f6f6f] bg-[#e4e4e4]" />
      <div className="flex h-[31px] shrink-0 items-stretch border-b-2 border-b-[#1f5a6b] bg-[#dcdcdc] pt-[4px] pl-[2px] font-['Noto_Sans',sans-serif] text-[11px] text-black">
        <DocTab name="support fenetre.par" active cls="w-[168px] pl-[18px]" icon={<PartDoc />} />
        <DocTab name="stor .par" cls="w-[110px] pl-[18px]" icon={<PartDoc />} />
        <DocTab name="Asm4.asm" cls="w-[122px] pl-[17px]" icon={<AsmDoc />} />
        <div className="ml-auto flex items-center pr-[2px] pb-1">
          <Cell label="Onglet précédent"><Ico w={6} h={9}><path d="M5.500.500v8L1 4.500z" stroke="#555" fill="#eee" /></Ico></Cell>
          <Cell label="Onglet suivant" cls="ml-[9px]"><Ico w={6} h={9}><path d="M.5.500v8L5 4.500z" stroke="#555" fill="#eee" /></Ico></Cell>
          <Cell label="Liste des onglets" cls="ml-[7px]"><Caret c="#000" /></Cell>
          <Cell label="Fermer l'onglet" cls="ml-[5px]"><Cross s={11} c="#000" /></Cell>
        </div>
      </div>
    </>
  );
}

/* ---------- PathFinder ---------- */

const Eye = ({ off }: { off?: boolean }) => (
  <Ico w={13} h={10}>
    <path d="M.7 5Q3.500 1 6.500 1t5.800 4Q9.500 9 6.500 9T.7 5z" fill="#fff" stroke="#444" strokeWidth="1.200" />
    <circle cx="6.500" cy="5" r="2.300" fill="#444" />
    {off && <path d="M2 10L11 0" stroke="#333" strokeWidth="1.500" />}
    {off && <path d="M1 7.500L9 .5M4 9.500l8-7" stroke="#fff" strokeWidth=".8" />}
  </Ico>
);
const Tri = () => (
  <Ico w={9} h={6}>
    <path d="M.5.500h8l-4 5z" fill="#444" />
  </Ico>
);

type Kind = "part" | "base" | "mat" | "plane" | "bodies" | "body" | "sketch" | "add" | "cut" | "round" | "mirror";

function TreeIcon({ k }: { k: Kind }) {
  switch (k) {
    case "part":
      return <Ico w={13} h={12}><path d="M1 1h5v5h6v5H1z" fill="#ececec" stroke={D} strokeWidth="1.200" /></Ico>;
    case "base":
      return <Ico w={15}><path d="M1.500 3v11M0 12.500h13M1.500 12.500L10 6" stroke={D} strokeWidth="1.200" /><path d="M11.500 5L7 6l3 3z" fill={D} /><path d="M3 .5h4L3.500 4H7M10 1l2 2 2-2M12 3v2M11 8l3 3M14 8l-3 3" stroke="#d39a3a" /></Ico>;
    case "mat":
      return <Ico w={14} h={15}><rect x=".6" y=".6" width="12.800" height="13.800" fill="#f2f2f2" stroke={D} strokeWidth="1.200" /><circle cx="4.500" cy="4.500" r="2.300" fill="#e58a3a" stroke="#7a3a10" strokeWidth=".6" /><circle cx="4.500" cy="10.500" r="2.300" fill="#55b3cf" stroke="#1f5a70" strokeWidth=".6" /><path d="M8.500 3.500H12M8.500 9.500H12" stroke={D} /></Ico>;
    case "plane":
      return <Ico w={14} h={12}><rect x=".5" y=".5" width="13" height="11" fill="#e4e4e4" stroke={D} /><path d="M.5 8h6v3.500" stroke={D} fill="#fff" /></Ico>;
    case "bodies":
      return <Ico w={14}><path d="M2.500 1.500h7v8h-7z" fill="#eee" stroke={D} /><path d="M7 5h3v3h3v5H6V5z" fill={O} stroke={DO} /></Ico>;
    case "body":
      return <Ico w={14} h={13}><path d="M4 1h6v4h3v7H4z" fill={O} stroke={DO} /><path d="M.5 5.500h8v7h-8zM4.500 5.500v7M.5 9h8" fill="#fff" stroke="#3c9ab8" /></Ico>;
    case "sketch":
      return <Ico w={15} h={15}><path d="M0 4h3M2 2v11h5M2 6Q6 0 14 1" stroke="#2aa3b5" /><circle cx="8" cy="8" r="3.500" stroke="#55b9c6" /><path d="M6 13l1-3 6-6 2 2-6 6z" fill="#c79a3c" stroke="#222" /></Ico>;
    case "add":
      return <Ico w={16} h={15}><path d="M.5 4.500L5 2l3-1.500L15.500 5 12 6.500q-2-2-4 .5L4.500 7z" fill="#c8ecf4" stroke="#5aa8bc" /><path d="M.5 4.500L4.500 7v7l-4-3z" fill="#9fb3ba" stroke="#6d858d" strokeWidth=".7" /><path d="M4.500 7L7 6v7l-2.500 1z" fill="#6fb6c8" /><path d="M9 8q1-2 3-1.500v7.500l-3-2z" fill="#a9bcc3" stroke="#6d858d" strokeWidth=".7" /><path d="M12 6.500L15.500 5v6.500L12 14z" fill="#7c8d94" /></Ico>;
    case "cut":
      return <Ico w={16} h={14}><path d="M.5 5L8 .5 15.500 5v4L8 13.500.5 9z" fill="#b5a79e" stroke="#5e5049" /><path d="M2.500 5L8 2l5.500 3L8 8.500z" fill="#d7622a" stroke="#9c3d10" strokeWidth=".6" /><path d="M8 8.500v5L15.500 9V5z" fill="#8e817a" /></Ico>;
    case "round":
      return <Ico w={16} h={15}><path d="M1 5l6-4 8 3v7l-6 3.500L1 11z" fill="#e6e6e6" stroke="#666" /><path d="M1 6q3-3 8 1v7.500L1 11z" fill={O} stroke={DO} strokeWidth=".7" /><path d="M9 7l6-3v7l-6 3.500z" fill="#9a9a9a" /></Ico>;
    case "mirror":
      return <Ico w={15} h={14}><path d="M5.500 1v12.500h-5z" fill="#eee" stroke={D} /><path d="M7.500 0v14" stroke={D} /><path d="M9.500 1v12.500h5z" fill={O} stroke={DO} /></Ico>;
  }
}

type Node = { t: string; k: Kind; lvl: 1 | 2; eye?: "on" | "off"; open?: boolean };

const TOP: Node[] = [
  { t: "Base", k: "base", lvl: 1, eye: "on" },
  { t: "Matière (Aucune)", k: "mat", lvl: 1 },
  { t: "Plans de référence de base", k: "plane", lvl: 1, eye: "on", open: true },
  { t: "Dessus (xy)", k: "plane", lvl: 2, eye: "on" },
  { t: "Droite (yz)", k: "plane", lvl: 2, eye: "on" },
  { t: "Face (xz)", k: "plane", lvl: 2, eye: "on" },
  { t: "Corps modélisés", k: "bodies", lvl: 1, eye: "on", open: true },
  { t: "Corps modélisé_1", k: "body", lvl: 2, eye: "on" },
];
const FEATURES: Node[] = [
  { t: "Esquisse 1", k: "sketch", lvl: 2, eye: "on" },
  { t: "Ajout de matière 1", k: "add", lvl: 2 },
  { t: "Esquisse 2", k: "sketch", lvl: 2, eye: "off" },
  { t: "Enlèvement 1", k: "cut", lvl: 2 },
  { t: "Esquisse 3", k: "sketch", lvl: 2, eye: "off" },
  { t: "Esquisse 4", k: "sketch", lvl: 2, eye: "off" },
  { t: "Enlèvement 3", k: "cut", lvl: 2 },
  { t: "Ajout de matière 2", k: "add", lvl: 2 },
  { t: "Congé 1", k: "round", lvl: 2 },
  { t: "Copie symétrique 1", k: "mirror", lvl: 2 },
  { t: "Esquisse 5", k: "sketch", lvl: 2, eye: "off" },
  { t: "Enlèvement 5", k: "cut", lvl: 2 },
  { t: "Esquisse 6", k: "sketch", lvl: 2, eye: "off" },
  { t: "Ajout de matière 4", k: "add", lvl: 2 },
  { t: "Congé 3", k: "round", lvl: 2 },
  { t: "Congé 5", k: "round", lvl: 2 },
  { t: "Congé 6", k: "round", lvl: 2 },
];

function TreeRow({ n }: { n: Node }) {
  return (
    <li className={`flex h-[18px] items-center whitespace-nowrap ${n.lvl === 1 ? "pl-[18px]" : "pl-[41px]"} ${n.eye === "off" ? "text-[#8b8b8b]" : ""}`}>
      <span className="w-4">{n.open && <button type="button" aria-label="Réduire" className="block"><Tri /></button>}</span>
      <span className="w-[18px]">
        {n.eye && <button type="button" aria-label={n.eye === "on" ? "Masquer" : "Afficher"} className="block"><Eye off={n.eye === "off"} /></button>}
      </span>
      <span className="w-[21px]"><TreeIcon k={n.k} /></span>
      {n.t}
    </li>
  );
}

function PathFinder() {
  return (
    <aside className="flex w-[254px] shrink-0 flex-col border border-[#1c4d74] bg-[#a4acbb] font-['Noto_Sans',sans-serif] text-[11px] text-black">
      <div className="flex h-[20px] shrink-0 items-center bg-[#16789b] pr-[8px] pl-[5px] text-white">
        <Ico w={19} h={17}>
          <path d="M2 1h5v5h5v5H2z" fill="#eee" stroke={D} />
          <path d="M4 11v3h7" stroke="#234" />
          <path d="M12.500 10.500h5v5h-5z" fill={O} stroke={DO} />
        </Ico>
        <h2 className="pl-1 text-[11px] leading-[20px]">PathFinder</h2>
        <Cell label="Menu du volet" cls="ml-auto"><MenuMark /></Cell>
        <Cell label="Fermer le volet" cls="ml-[7px]"><Cross s={9} /></Cell>
      </div>
      <div className="mx-[2px] mt-[2px] mb-px flex-1 bg-white">
        <ul>
          <li className="flex h-[18px] items-center pl-[5px]">
            <span className="w-[13px]"><button type="button" aria-label="Réduire" className="block"><Tri /></button></span>
            <span className="w-[19px]"><TreeIcon k="part" /></span>
            support fenetre.par
          </li>
          {TOP.map((n) => <TreeRow key={n.t} n={n} />)}
          <li className="flex h-[18px] items-center pl-[18px]">
            <span className="w-4"><button type="button" aria-label="Réduire" className="block"><Tri /></button></span>
            <span className="flex h-[14px] w-[183px] items-center justify-between border border-[#e8bf6c] bg-[#fcd07c] pr-[6px] pl-[2px] leading-[12px]">
              Ordonné
              <Ico w={13} h={11}>
                <rect x=".5" y=".5" width="10" height="10" fill="#fde9c4" stroke="#f3d9a4" />
                <path d="M3 4l3 3 6-6" stroke="#f0c070" strokeWidth="1.500" />
              </Ico>
            </span>
          </li>
          {FEATURES.map((n) => <TreeRow key={n.t} n={n} />)}
        </ul>
      </div>
    </aside>
  );
}

/* ---------- model view ---------- */

function ModelView() {
  return (
    <svg viewBox="254 198 1666 814" preserveAspectRatio="xMidYMid slice" className="block h-full w-full" fill="none" role="img" aria-label="Vue filaire de la pièce">
      <g stroke="#757779" strokeWidth="1">
        <path d="M870 1012L331 605 985 252 1559 682 950 1012" />
        <path d="M695 198L676 751 1022 1012" />
        <path d="M1265 198L1245 794 842 1012" />
        <path d="M627 1012L645 494 1192 198" />
        <path d="M764 198L1215 536 1198 1012" />
        <path d="M869 1010L1033 921 1069 949" />
        <path d="M770 1012l10-5v5M1064 1012v-7l9 7" />
      </g>
      <g transform="translate(720 430) scale(0.33333)" strokeWidth="3">
        {/* hidden edges */}
        <g stroke="#c3c5c6">
          <path d="M630 62L555 395 570 418 860 275M688 78L620 400 728 488M484 420L555 395M575 412L850 272M570 418L620 400" />
          <path d="M628 185L742 125 850 205M742 125V320M735 280L850 215M740 348L862 290" />
          <path d="M76 696L386 930M298 888L495 782M300 870L386 930" />
          <path d="M198 802L260 845 298 775M198 802L250 690M158 690L235 650 330 690" />
          <path d="M858 402L1003 509 1198 403V370M858 340L858 402M905 378V420M1003 447V509M960 284L905 380M1100 310L1020 360" />
          <path d="M298 690q8-30 30-32t22 22M952 330q0-28 25-30t25 20M952 330q25 20 45-5" />
          <path d="M495 725V782M967 195V290M775 450V557M896 450V557M457 620V729M578 620V729" />
        </g>
        {/* visible edges */}
        <g stroke="#6c6e70">
          <path d="M66 768L70 660 298 800V888L155 783V688M84 670L130 664 390 855M84 670L470 463M90 676L484 474M76 690L470 472" />
          <path d="M382 1005L390 855 742 667M386 930L770 722M386 895L300 835M300 820L455 738M310 830Q315 815 345 808L495 725 455 698" />
          <path d="M610 568L742 500 870 590Q903 612 903 650L898 725 742 612V500M610 568V680L766 797 770 712Q768 684 742 667L610 568M610 680L742 605" />
          <path d="M877 592L1228 405M903 650L1285 440M1282 519L1285 435Q1275 415 1200 360L1185 357 1003 447 958 420 942 428" />
          <path d="M1200 372L1275 420M1228 405Q1262 405 1285 435" />
          <path d="M470 463L548 150Q548 118 580 95L630 64Q665 42 700 62L830 162Q868 185 868 235V285Q866 297 850 305L785 338Q750 352 724 337V275L610 195 598 557 484 474 558 158" />
          <path d="M480 464L553 150Q556 118 590 93Q640 62 684 66L825 168Q860 190 860 235V295M575 152Q575 118 600 98L742 205Q785 235 785 290V338M548 150Q562 160 575 152L724 262" />
          <path d="M712 262Q712 210 765 190L825 168Q850 185 850 230V302M712 262Q720 294 760 295L785 290 866 248M590 93L742 200 Q712 222 712 262" />
          <path d="M728 488L734 345M728 488L598 557M740 330L868 262M740 338L868 270M724 275L740 285" />
          <path d="M868 246L967 193 1075 280 1155 360 1003 438M868 254L967 202 1060 272M858 340L905 378V405L945 428 995 330M885 385L940 280M858 340L950 292M958 420V462M1003 447V505M905 405L958 440" />
          <path d="M1000 265Q1000 238 1020 238L1075 280M1005 245L1062 290M1012 240L1068 284M995 290L1000 262 1062 290 1055 335 995 290M940 280Q950 268 965 280L1015 325" />
          <path d="M1020 310Q1020 330 1012 350Q1008 378 1035 383Q1060 375 1055 350Q1045 335 1055 315" />
          <path d="M347 620Q347 592 362 592L415 635M347 600L408 645M352 595L412 640M340 645L347 618 408 645 400 690 340 645M285 635Q290 622 305 632L352 670M415 635L470 684 455 692V740" />
          <path d="M370 660Q372 680 358 695Q350 730 372 737Q405 732 405 705Q395 690 400 675M285 635L250 690M350 672L298 775M158 713L215 690" />
          <ellipse cx="837" cy="448" rx="60" ry="38" />
          <ellipse cx="834" cy="557" rx="59" ry="38" />
          <ellipse cx="518" cy="620" rx="59" ry="38" />
          <ellipse cx="515" cy="729" rx="59" ry="38" />
        </g>
        <path d="M66 768L960 284 1282 519 382 1005z" stroke="#47456f" strokeWidth="3.500" />
        {/* origin triad */}
        <path d="M675 643L600 588" stroke="#1fd01f" strokeWidth="9" />
        <path d="M582 576l36 8-18 22z" fill="#12c512" />
        <path d="M675 643L755 602" stroke="#c02020" strokeWidth="9" />
        <path d="M780 587l-28 26-12-20z" fill="#d01515" />
        <path d="M676 643V560" stroke="#1010b0" strokeWidth="9" />
        <path d="M677 536l11 38h-22z" fill="#0000a8" />
        <circle cx="675" cy="643" r="15" fill="#d8c800" stroke="#a09400" strokeWidth="2" />
      </g>
      <g className="font-['Liberation_Sans',Arial,sans-serif] text-[15px]">
        <text x="940" y="605" fill="#1010b0">Z</text>
        <text x="901" y="621" fill="#22d422">Y</text>
        <text x="982" y="626" fill="#ee2222">X</text>
      </g>
      {/* view cube */}
      <g stroke="#a9abac" strokeWidth="1">
        <path d="M1820 926L1859 908 1894 931 1854 950z" fill="#fdfefe" />
        <path d="M1820 926L1854 950 1853 990 1822 963z" fill="#f9fafa" />
        <path d="M1854 950L1894 931 1889 968 1853 990z" fill="#eceeee" />
      </g>
      <g className="font-['Liberation_Sans',Arial,sans-serif]" fill="#55585a">
        <text transform="matrix(.88 -.42 .45 .8 1839 939)" className="text-[10px]">DESSUS</text>
        <text transform="matrix(.75 .6 0 1 1823 953)" className="text-[9px]">GAUCHE</text>
        <text transform="matrix(.88 -.46 0 1 1862 970)" className="text-[9px]">FACE</text>
      </g>
      <path d="M1856 947V931" stroke="#8080e8" />
      <path d="M1856 947L1842 938" stroke="#70d070" />
      <path d="M1856 947L1872 940M1869 938l5 1-4 3" stroke="#f08080" />
      <path d="M1854 946h4v4h-4z" fill="#d8cf30" />
    </svg>
  );
}

/* ---------- library panel ---------- */

type FKind = "music" | "music2" | "img" | "cloud" | "pc" | "lib" | "cn" | "down" | "folder" | "doc" | "video" | "desk" | "gal" | "net" | "home" | "link" | "par";

function FileIcon({ k }: { k: FKind }) {
  const folder = (
    <>
      <path d="M0 1.500h6l1.500 2H16V14H0z" fill="#e8b229" />
      <path d="M0 4.500h16V14H0z" fill="#fcd667" />
    </>
  );
  switch (k) {
    case "music":
    case "music2":
      return <Ico><circle cx="8" cy="8" r="7.800" fill={k === "music" ? "#8c70a0" : "#d9705c"} /><circle cx="6.500" cy="11" r="2" fill="#fff" /><path d="M8 11V4l3 1.500" stroke="#fff" strokeWidth="1.300" /></Ico>;
    case "img":
      return <Ico><rect x="1" y="1" width="14" height="14" rx="1" fill="#1f7fc8" /><path d="M2 14l5-6 6 6z" fill="#e8f4fc" /><path d="M11 3v3M9.500 4.500h3" stroke="#fff" /></Ico>;
    case "cloud":
      return <Ico><path d="M4 13a4 4 0 0 1-1-7.500 5 5 0 0 1 8-1A4 4 0 0 1 13 13z" fill="#1272c8" /><path d="M3 13q-3-4 2-5 5 0 10 5z" fill="#2a9df0" /></Ico>;
    case "pc":
      return <Ico><rect x=".5" y="1.500" width="15" height="10.500" fill="#1796c0" /><path d="M.5 1.500H15L.5 12z" fill="#31b6d6" /><path d="M8 12v3M5 15.500h6" stroke="#9ab" /></Ico>;
    case "lib":
      return <Ico>{folder}<path d="M0 13.500h16" stroke="#2288bb" strokeWidth="1.500" /></Ico>;
    case "cn":
      return <Ico><rect width="16" height="16" fill="#35a077" /><text x="1.500" y="12" fill="#fff" className="font-['Liberation_Sans',sans-serif] text-[10px] font-bold">Cn</text></Ico>;
    case "down":
      return <Ico><path d="M8 0v11M3.500 7L8 11.500 12.500 7M2 15h12" stroke="#2aa88a" strokeWidth="1.600" /></Ico>;
    case "folder":
      return <Ico>{folder}</Ico>;
    case "doc":
      return <Ico><rect x="2" y="1" width="12" height="14" rx="1" fill="#8b9db0" /><path d="M4 4.500h3M9 4.500h3M4 7.500h3M9 7.500h3M4 10.500h8" stroke="#fff" strokeWidth="1.200" /></Ico>;
    case "video":
      return <Ico><rect x="1" y="1" width="14" height="14" rx="1" fill="#8a49cf" /><path d="M6 5l5 3-5 3z" fill="#fff" /><path d="M2.500 2v12M13.500 2v12" stroke="#4d1f8a" strokeDasharray="2 2" /></Ico>;
    case "desk":
      return <Ico><rect x="0" y="2.500" width="16" height="11" rx="1" fill="#1793c4" /><path d="M0 2.500h16L0 13.500z" fill="#28b4cf" /><path d="M2.500 4v4" stroke="#fff" strokeDasharray="1.500 1" strokeWidth="1.500" /></Ico>;
    case "gal":
      return <Ico><rect x="2" y="3" width="14" height="13" fill="#1a5d9c" /><rect x="0" y="0" width="14" height="14" fill="#1f86d0" /><path d="M1 13l5-6 6 6z" fill="#e8f4fc" /></Ico>;
    case "net":
      return <Ico><rect x="3" y="3.500" width="13" height="9" fill="#1796c0" /><circle cx="5" cy="4.500" r="4.500" fill="#7fb4cf" /><path d="M1 4q4 2 8-1M5 0v9" stroke="#d8ecf5" /><path d="M9 13v2.500M6 15.500h6" stroke="#9ab" /></Ico>;
    case "home":
      return <Ico><path d="M3 8v7h3.500v-4h3v4H13V8L8 3z" fill="#b8bcc0" /><path d="M1 8.500L8 1.500l7 7" stroke="#e08a4c" strokeWidth="2" /></Ico>;
    case "link":
      return <Ico>{folder}<rect y="8" width="8" height="8" fill="#fff" stroke="#ccd" strokeWidth=".5" /><path d="M2 14l3.500-3.500M3 10.500h2.500V13" stroke="#1a73c8" /></Ico>;
    case "par":
      return <Ico><path d="M5 1h6l3 3v11H5z" fill="#fff" stroke={D} strokeWidth="1.200" /><path d="M11 1v3h3" stroke={D} /><path d="M1.500 5.500h4v4h4V14h-8z" fill="#4f9bb0" stroke="#234" /></Ico>;
  }
}

const FILES: [string, FKind][] = [
  ["Musique", "music"], ["Images", "img"], ["Musique", "music2"], ["OneDrive", "cloud"], ["Ce PC", "pc"], ["Images", "img"],
  ["Bibliothèques", "lib"], ["Connector", "cn"], ["Téléchargements", "down"], ["Téléchargements", "down"], ["greg", "folder"],
  ["Documents", "doc"], ["Vidéos", "video"], ["Bureau", "desk"], ["Documents", "doc"], ["Galerie", "gal"], ["Réseau", "net"],
  ["Vidéos", "video"], ["Accueil", "home"], ["credit mutuel document TOUZEAU", "folder"], ["loiretech", "folder"], ["pascale", "folder"],
  ["Phoenix DVD V5.5", "folder"], ["site aeroptint 3d", "folder"], ["Documents - Raccourci.lnk", "link"],
  ["micromax solidedge - Raccourci.lnk", "link"], ["stor .par", "par"], ["support fenetre.par", "par"],
];

const Books = () => (
  <Ico w={18} h={17}>
    <path d="M1 4l4-3 3 1v12l-3 1-4-2z" fill={O} stroke="#8a4208" />
    <path d="M7 4l4-3 4 1v12l-5 1-3-2z" fill="#f6a04a" stroke="#8a4208" />
    <path d="M8.500 7.500h9v9h-9z" fill="#eee" stroke="#333" />
    <path d="M11 10h4v4h-4z" fill="#555" />
  </Ico>
);

function Tool({ label, dim, wide, children }: P & { label: string; dim?: boolean; wide?: boolean }) {
  return (
    <button
      type="button"
      aria-label={label}
      disabled={dim}
      className={`flex h-5 items-center justify-center gap-[2px] rounded-[3px] border ${wide ? "w-[30px]" : "w-5"} ${dim ? "border-[#e6e6e6] bg-[#f3f3f3]" : "border-[#c9c9c9] bg-[#fdfdfd]"}`}
    >
      {children}
    </button>
  );
}

function Library() {
  return (
    <aside className="absolute top-[3px] right-0 flex w-[254px] flex-col border border-[#26507c] bg-[#b3b9c5] font-['Liberation_Sans',Arial,sans-serif] text-[11px] text-black">
      <div className="flex h-[18px] items-center bg-[#16789b] pr-[8px] pl-[6px] text-white">
        <Books />
        <h2 className="truncate pl-1 font-['Noto_Sans',sans-serif] text-[11px] leading-[18px]">Bibliothèque des fonctions tec...</h2>
        <Cell label="Menu du volet" cls="ml-auto"><MenuMark /></Cell>
        <Cell label="Épingler le volet" cls="ml-[6px]"><Ico w={8} h={12}><path d="M2 1h4v6H2zM0 7.500h8M4 8v4" stroke="#fff" strokeWidth="1.300" /></Ico></Cell>
        <Cell label="Fermer le volet" cls="ml-2"><Cross s={9} /></Cell>
      </div>
      <div className="m-[2px] mt-[3px] flex flex-col bg-white">
        <div className="flex h-[28px] bg-[#717171]">
          <button type="button" aria-label="Bibliothèque" className="flex w-[28px] items-center justify-center border-t-2 border-[#1c4587] bg-[#c6c6c6]"><Books /></button>
          <button type="button" aria-label="Matières" className="ml-2 flex items-center">
            <Ico>
              <rect width="16" height="16" fill="#6a5fa0" />
              <path d="M0 2q13 1 14 14H0z" fill="#2a9fd0" />
              <path d="M0 5q10 1 11 11H0z" fill="#35b04a" />
              <path d="M0 8q7 1 8 8H0z" fill="#f2e02c" />
              <path d="M0 11q4 1 5 5H0z" fill="#e8442c" />
              <path d="M.5.500h15v15H.5z" stroke="#444" />
            </Ico>
          </button>
        </div>
        <div className="flex h-[31px] items-center justify-end gap-[3px] pr-[2px]">
          <Tool label="Ajouter"><Ico w={14}><path d="M5 1h4v4h4v4H9v4H5V9H1V5h4z" fill="#7de04a" stroke="#2c8a1a" /></Ico></Tool>
          <Tool label="Dossier de départ"><Ico><path d="M3 7h10v8H3z" fill="#f8e49a" stroke="#a88a3a" /><path d="M1 8l7-7 7 7z" fill="#3a5f8c" stroke="#1c3550" /><path d="M11 1h2v3h-2z" fill="#3a5f8c" /><path d="M5 9h6v4H5z" fill="#fff3c0" stroke="#c09a3a" strokeWidth=".6" /></Ico></Tool>
          <Tool label="Précédent" dim><Ico w={14}><path d="M1 7l5-4v2.500h7v3H6V11z" fill="#e4e4e4" stroke="#aaa" /></Ico></Tool>
          <Tool label="Suivant" dim><Ico w={14}><path d="M13 7L8 3v2.500H1v3h7V11z" fill="#e4e4e4" stroke="#aaa" /></Ico></Tool>
          <Tool label="Dossier parent" dim><Ico><path d="M1 5h5l1 1h5v8H1z" fill="#eee" stroke="#bbb" /><path d="M8 11q4-1 4-6H9.500L13 1l3 4h-2q0 6-6 6z" fill="#ddd" stroke="#aaa" strokeWidth=".7" /></Ico></Tool>
          <Tool label="Nouveau dossier"><Ico><path d="M.5 4.500h5l1 1.500h7v8.500H.5z" fill="#fbe08a" stroke="#b8923a" /><path d="M12 0v8M9 2l6 4M15 2L9 6" stroke="#e22" strokeWidth="1.300" /></Ico></Tool>
          <Tool label="Affichage" wide><Ico w={17} h={14}><path d="M.5.500h15v12H.5z" fill="#fff" stroke="#1c4587" /><path d="M0 0h16v3H0z" fill="#1c4587" /><path d="M3 5.500h10M3 8h10M3 10.500h10" stroke="#4a7ab5" strokeWidth="1.500" strokeDasharray="2 2" /></Ico><Caret c="#1c4587" /></Tool>
          <span className="w-px" />
          <Tool label="Rechercher"><Ico><path d="M9 9l5 5" stroke="#c89a4a" strokeWidth="3" /><circle cx="6" cy="6" r="4.500" fill="#bfe0fa" stroke="#2a62b5" strokeWidth="1.500" /></Ico></Tool>
        </div>
        <label className="relative mx-px mt-[2px] flex h-[22px] items-center border border-[#c4c4c4] pl-[2px]">
          <FileIcon k="desk" />
          <select aria-label="Emplacement" className="h-full flex-1 appearance-none bg-transparent pl-1 outline-none">
            <option>Bureau</option>
          </select>
          <span className="pointer-events-none absolute top-[7px] right-[5px]"><Ico w={9} h={6}><path d="M.5.500l4 4 4-4" stroke="#555" /></Ico></span>
        </label>
        <label className="mx-px mt-[3px] flex h-[20px] items-center border border-[#dadada] pr-[5px] pl-[2px]">
          <input aria-label="Rechercher un fichier" placeholder="Taper pour trouver un fichier ou dossier" className="min-w-0 flex-1 outline-none placeholder:text-[#555]" />
          <Ico w={11}><circle cx="6.500" cy="4.500" r="3.800" stroke="#333" /><path d="M4 7.500L.5 10.500" stroke="#333" strokeWidth="1.300" /></Ico>
        </label>
        <ul className="mx-[2px] mt-px mb-[2px] h-[531px] border border-[#777] border-r-[#c8ccd4] border-b-[#c8ccd4]">
          {FILES.map(([name, k], i) => (
            <li key={i} className="flex h-[17px] items-center whitespace-nowrap">
              <span className="shrink-0"><FileIcon k={k} /></span>
              <span className={`h-[17px] pr-[2px] pl-[3px] leading-[18px] ${i === 0 ? "bg-[#f0f0f0]" : ""}`}>{name}</span>
            </li>
          ))}
        </ul>
      </div>
    </aside>
  );
}

/* ---------- status bar ---------- */

const Round = ({ plus }: { plus?: boolean }) => (
  <Ico w={13}>
    <circle cx="6.500" cy="6.500" r="6.500" fill="#fff" />
    <path d={plus ? "M3 6.500h7M6.500 3v7" : "M3 6.500h7"} stroke={DO} strokeWidth="1.300" />
  </Ico>
);

function StatusBar() {
  return (
    <footer className="flex h-[18px] shrink-0 items-start justify-end overflow-hidden bg-[#006488] pr-[3px]">
      <div className="flex gap-[6px] pt-[3px]">
        <Cell label="Aire de visualisation"><Win><rect x="2.500" y="5.500" width="8" height="6" stroke="#888" /><Lens x={10} y={8} r={4} /></Win></Cell>
        <Cell label="Zoom"><ZoomPM /></Cell>
        <Cell label="Cadrer"><Win><path d="M4 5l8 8M12 5l-8 8M3 7V5h3M10 5h3v2M13 11v2h-3M6 13H3v-2" stroke={DO} /></Win></Cell>
        <Cell label="Panoramique"><PanWin /></Cell>
        <Cell label="Rotation"><RotWin /></Cell>
        <Cell label="Vue précédente"><Ico><path d="M7 1L1 5l6 4V7h7V3H7z" fill="#ddd" stroke="#444" /><path d="M8 12l3-3 3 3v4H8z" fill={O} /></Ico></Cell>
        <Cell label="Orientation des vues"><Ico><path d="M4.500 1.500h10v10h-10z" fill="#eee" stroke={DO} /><path d="M1.500 4.500h10v10h-10z" fill={O} stroke={DO} /><path d="M5 12V7h5z" fill="#333" /></Ico></Cell>
        <Cell label="Style de vue"><Ico><path d="M1 0h10v9H1z" fill="#eee" stroke="#777" /><path d="M6 5h10v11H6z" fill={O} stroke={DO} /></Ico></Cell>
      </div>
      <div className="ml-1 flex items-start gap-1 pt-[3px]">
        <Cell label="Zoom arrière"><Round /></Cell>
        <input
          type="range"
          aria-label="Zoom"
          min={0}
          max={100}
          defaultValue={56}
          className="mt-[3px] h-[13px] w-[115px] appearance-none bg-transparent [&::-webkit-slider-runnable-track]:h-px [&::-webkit-slider-runnable-track]:bg-white [&::-webkit-slider-thumb]:-mt-[8px] [&::-webkit-slider-thumb]:h-[10px] [&::-webkit-slider-thumb]:w-[7px] [&::-webkit-slider-thumb]:appearance-none [&::-webkit-slider-thumb]:rounded-b-[3px] [&::-webkit-slider-thumb]:bg-white"
        />
        <Cell label="Zoom avant"><Round plus /></Cell>
      </div>
      <div className="ml-2 flex items-start gap-[9px] pt-[4px]">
        <Cell label="YouTube"><Ico w={16} h={14}><rect y="1" width="16" height="12" rx="3" fill="#f00d0d" /><path d="M6 4.500v5l5-2.500z" fill="#fff" /></Ico></Cell>
        <Cell label="Enregistrer la vidéo"><Ico w={14}><circle cx="7" cy="7" r="7" fill="#f4f4f4" /><circle cx="7" cy="7" r="4" fill="#b01818" stroke="#666" /></Ico></Cell>
        <Cell label="Publier"><Ico w={15}><rect x="1" width="13" height="15" rx="2" fill="#fff" /><path d="M7.500 11V3M4.500 6l3-3 3 3M4 12h7" stroke="#c22" strokeWidth="1.400" /></Ico></Cell>
      </div>
    </footer>
  );
}

export default function App() {
  return (
    <div className="flex h-screen flex-col overflow-hidden bg-[#fafdfd]">
      <Header />
      <Ribbon />
      <Bars />
      <main className="flex min-h-0 flex-1">
        <PathFinder />
        <div className="relative min-w-0 flex-1 bg-[#fafdfc]">
          <ModelView />
          <Library />
        </div>
      </main>
      <StatusBar />
    </div>
  );
}
